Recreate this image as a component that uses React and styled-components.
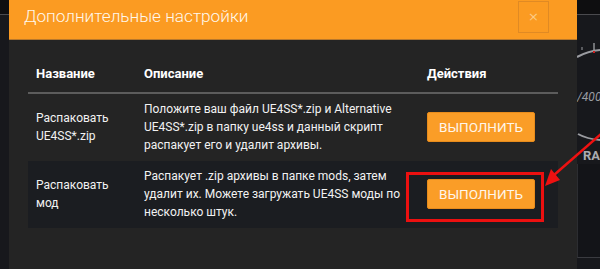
import styled, { createGlobalStyle } from "styled-components";

const GlobalStyle = createGlobalStyle`
  html, body {
    margin: 0;
    padding: 0;
    background: #1a1a1d;
  }
  body {
    font-family: Roboto, "Liberation Sans", sans-serif;
  }
`;

const Screen = styled.div`
  position: relative;
  width: 600px;
  height: 269px;
  overflow: hidden;
  background: #1a1a1d;
`;

const Backdrop = styled.div`
  display: flex;
  flex-direction: column;
  height: 100%;
`;

const TopStrip = styled.div`
  height: 14px;
  background: #0e0e10;
  border-bottom: 1px solid #4a4a4e;
`;

const Workspace = styled.div`
  flex: 1;
  display: flex;
  justify-content: flex-end;
  background: #17181c;
`;

const SideColumn = styled.div`
  width: 23px;
  display: flex;
  flex-direction: column;
  overflow: hidden;
`;

const GaugeLabel = styled.div`
  height: 20px;
  padding-left: 6px;
  font-weight: 700;
  font-size: 13px;
  line-height: 24px;
  color: #a9abb0;
  white-space: nowrap;
`;

const SidePanel = styled.div`
  height: 93px;
  background: #131418;
  border-left: 1px solid #2c2d31;
  border-bottom: 1px solid #3a3b40;
`;

const Modal = styled.div`
  position: absolute;
  left: 9px;
  top: 0;
  width: 568px;
  height: 290px;
  display: flex;
  flex-direction: column;
  background: #242424;
`;

const Header = styled.div`
  height: 39px;
  display: flex;
  align-items: flex-start;
  justify-content: space-between;
  padding: 0 28px 0 15px;
  background: #fb9b22;
  border-bottom: 1px solid #b8782c;
`;

const Title = styled.h4`
  margin: 0;
  padding-top: 4px;
  font-weight: 300;
  font-size: 17.2px;
  line-height: 24px;
  color: #fff8ec;
`;

const Close = styled.button`
  width: 31px;
  height: 32px;
  margin-top: 1px;
  padding: 0;
  background: transparent;
  border: 1px solid #e08a24;
  color: #fccb86;
  font-family: "DejaVu Sans", sans-serif;
  font-size: 13px;
  line-height: 30px;
`;

const Body = styled.div`
  padding: 16px 19px 0;
`;

const Table = styled.table`
  width: 530px;
  table-layout: fixed;
  border-collapse: collapse;
  color: #f2f2f2;
  font-size: 12px;
  line-height: 18px;

  th,
  td {
    box-sizing: border-box;
  }
`;

const Th = styled.th`
  width: ${(p) => p.$w}px;
  padding: 9px 8px;
  text-align: left;
  font-size: 13px;
  font-weight: 700;
  color: #ffffff;
  border-bottom: 2px solid #5c5c5c;
`;

const Row = styled.tr`
  background: ${(p) => (p.$striped ? "#1b1d21" : "transparent")};
  & + & td {
    border-top: 1px solid #5c5c5c;
  }
`;

const Td = styled.td`
  padding: 6px 8px 7px;
  vertical-align: middle;
`;

const RunButton = styled.button`
  width: 108px;
  height: 30px;
  padding: 0;
  background: #fa9d27;
  border: 1px solid #e88c1c;
  border-radius: 2px;
  color: #fff6ea;
  font-family: Roboto, "Liberation Sans", sans-serif;
  font-size: 13.5px;
  line-height: 28px;
`;

const Highlight = styled.div`
  position: absolute;
  left: 406px;
  top: 172px;
  width: 132px;
  height: 44px;
  border: 3px solid #ec1010;
`;

const ArrowLayer = styled.svg`
  position: absolute;
  left: 0;
  top: 0;
  pointer-events: none;
`;

const rows = [
  {
    name: "Распаковать UE4SS*.zip",
    text: "Положите ваш файл UE4SS*.zip и Alternative UE4SS*.zip в папку ue4ss и данный скрипт распакует его и удалит архивы.",
  },
  {
    name: "Распаковать мод",
    text: "Распакует .zip архивы в папке mods, затем удалит их. Можете загружать UE4SS моды по несколько штук.",
  },
];

function Gauge() {
  return (
    <svg width="23" height="129" viewBox="0 0 23 129">
      <path d="M0 42 Q11 36 23 35" stroke="#9a9ba0" strokeWidth="2" fill="none" />
      <line x1="5" y1="32" x2="5" y2="35" stroke="#9a9ba0" strokeWidth="1" />
      <line x1="17" y1="28" x2="17" y2="35" stroke="#c9cacd" strokeWidth="1" />
      <rect x="16" y="36" width="2" height="2" fill="#d02020" />
      <text
        x="0"
        y="86"
        fill="#9a9ca2"
        fontSize="12"
        fontStyle="italic"
        fontFamily="Roboto, sans-serif"
      >
        /4000
      </text>
      <path d="M1 119 Q10 124 23 125" stroke="#9a9ba0" strokeWidth="2" fill="none" />
    </svg>
  );
}

export default function App() {
  return (
    <>
      <GlobalStyle />
      <Screen>
        <Backdrop>
          <TopStrip />
          <Workspace>
            <SideColumn>
              <Gauge />
              <GaugeLabel>RAM</GaugeLabel>
              <SidePanel />
            </SideColumn>
          </Workspace>
        </Backdrop>

        <Modal>
          <Header>
            <Title>Дополнительные настройки</Title>
            <Close>×</Close>
          </Header>
          <Body>
            <Table>
              <thead>
                <tr>
                  <Th $w={108}>Название</Th>
                  <Th $w={283}>Описание</Th>
                  <Th $w={139}>Действия</Th>
                </tr>
              </thead>
              <tbody>
                {rows.map((r, i) => (
                  <Row key={r.name} $striped={i % 2 === 1}>
                    <Td>{r.name}</Td>
                    <Td>{r.text}</Td>
                    <Td>
                      <RunButton>ВЫПОЛНИТЬ</RunButton>
                    </Td>
                  </Row>
                ))}
              </tbody>
            </Table>
          </Body>
        </Modal>

        <Highlight />
        <ArrowLayer width="600" height="269" viewBox="0 0 600 269">
          <line x1="640" y1="100" x2="554" y2="175" stroke="#ee1111" strokeWidth="2.5" />
          <polygon points="545,186 560,180 551,169" fill="#ee1111" />
        </ArrowLayer>
      </Screen>
    </>
  );
}
